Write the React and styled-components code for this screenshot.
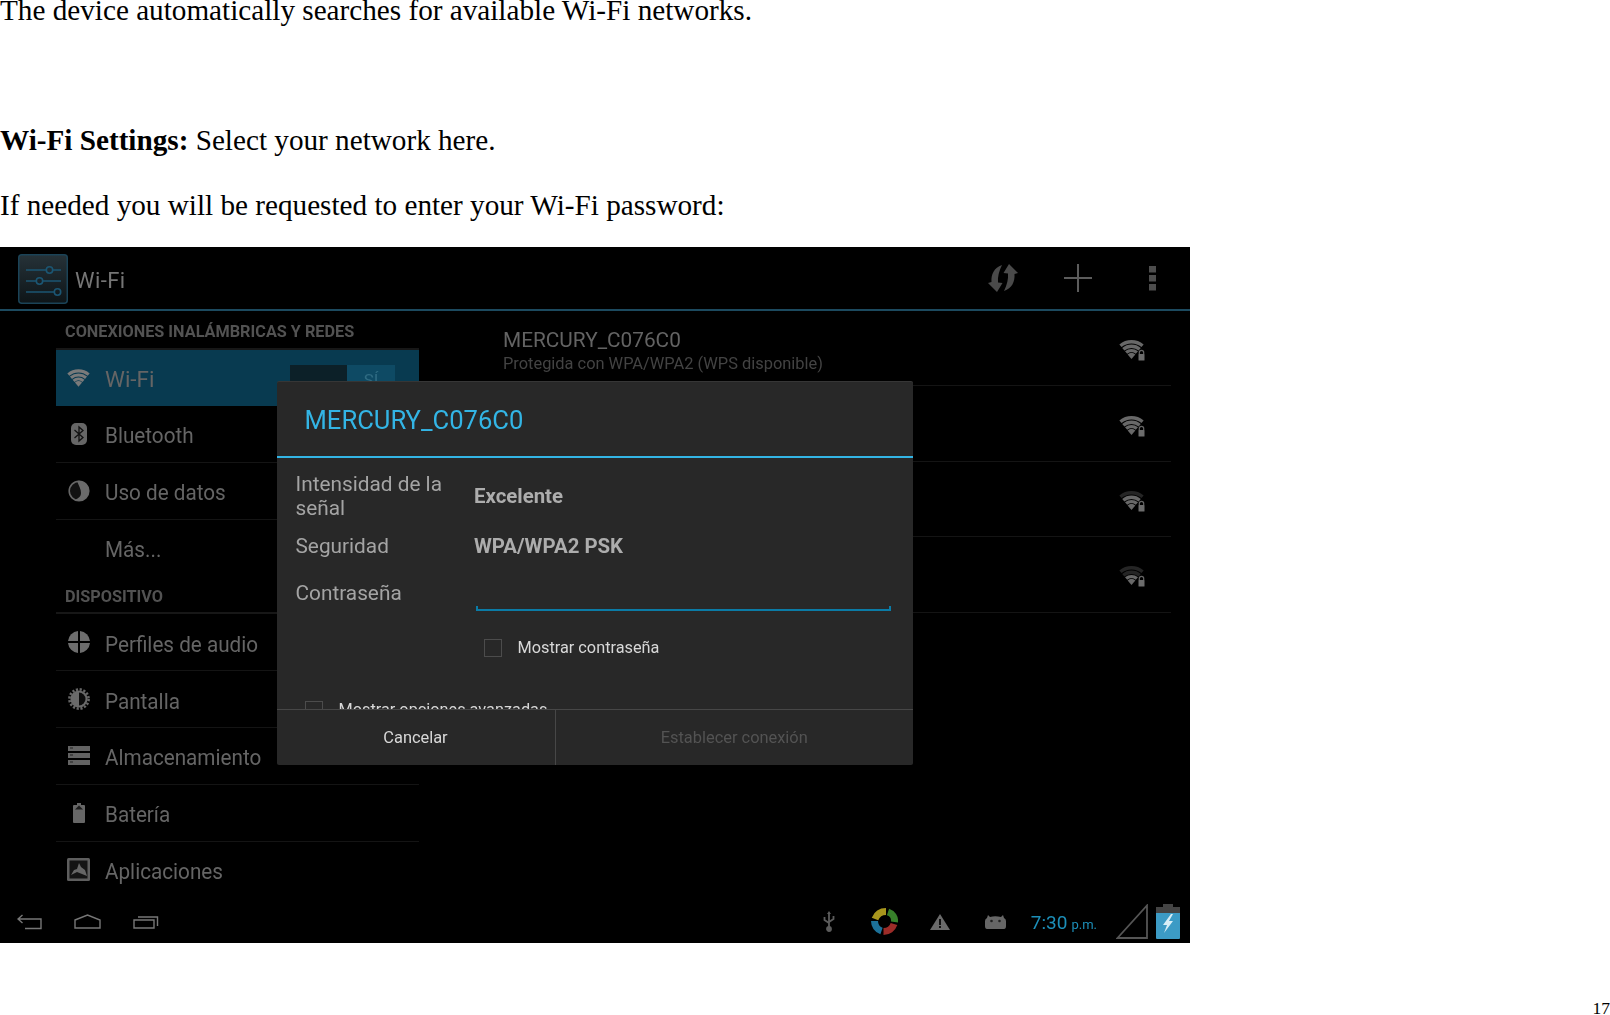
import React from "react";
import styled, { createGlobalStyle } from "styled-components";

const GlobalStyle = createGlobalStyle`
  html, body { margin: 0; padding: 0; background: #fff; }
  body { font-family: "Liberation Serif", "Times New Roman", serif; color: #000; overflow: hidden; }
`;

const Page = styled.div`
  width: 1610px;
  height: 1015px;
  overflow: hidden;
`;

const Paragraph = styled.p`
  margin: ${({ $top }) => $top}px 0 0;
  font-size: 29.2px;
  line-height: 22px;
  white-space: nowrap;
`;

const Screen = styled.div`
  position: relative;
  width: 1190px;
  height: 696px;
  margin-top: 31px;
  background: #000;
  display: flex;
  flex-direction: column;
  font-family: Roboto, "Noto Sans", sans-serif;
  filter: blur(0.55px);
  overflow: hidden;
`;

const PageNumber = styled.div`
  margin-top: 56px;
  text-align: right;
  font-size: 17.5px;
  line-height: 18px;
`;

const TopBar = styled.div`
  height: 62px;
  flex: none;
  border-bottom: 2px solid #1c4a5f;
  display: flex;
  align-items: center;
  padding: 0 0 0 18px;
`;

const TileSlot = styled.span`
  display: inline-flex;
  padding-top: 1px;
`;

const TopTitle = styled.span`
  margin-left: 7px;
  padding-top: 4px;
  font-size: 22px;
  letter-spacing: 0.4px;
  color: #757575;
  flex: 1;
`;

const TopActions = styled.div`
  display: flex;
  align-items: center;
  padding-right: 34px;
  gap: 46px;
`;

const OverflowSlot = styled.span`
  display: inline-flex;
  margin-left: 11px;
`;

const Content = styled.div`
  flex: 1;
  display: flex;
  min-height: 0;
`;

const LeftPane = styled.div`
  width: 363px;
  margin-left: 56px;
  flex: none;
`;

const SectionHeader = styled.div`
  height: ${({ $height }) => $height}px;
  box-sizing: border-box;
  padding: ${({ $pad }) => $pad}px 0 0 9px;
  border-bottom: 2px solid #171717;
  font-size: 16.25px;
  font-weight: 700;
  line-height: 20px;
  color: #525252;
  white-space: nowrap;
`;

const Row = styled.div`
  position: relative;
  height: ${({ $active }) => ($active ? 56 : 56.8)}px;
  box-sizing: border-box;
  display: flex;
  align-items: center;
  background: ${({ $active }) => ($active ? "#083a50" : "transparent")};
  border-bottom: ${({ $active, $last }) => ($active || $last ? "none" : "1px solid #141414")};
`;

const RowIcon = styled.div`
  width: 49px;
  flex: none;
  display: flex;
  justify-content: center;
  padding-right: 4px;
  box-sizing: border-box;
`;

const RowLabel = styled.span`
  display: inline-block;
  padding-top: ${({ $wide }) => ($wide ? 2 : 4)}px;
  font-size: 22px;
  color: #656565;
  white-space: nowrap;
  transform-origin: left center;
  transform: scaleX(${({ $wide }) => ($wide ? 1.02 : 0.94)});
`;

const Switch = styled.div`
  position: absolute;
  left: 234px;
  top: 15px;
  width: 105px;
  height: 40px;
  background: #0c2028;
  display: flex;
  justify-content: flex-end;
`;

const SwitchThumb = styled.div`
  width: 48px;
  background: #0e4a64;
  color: #2f6b82;
  font-size: 17px;
  text-align: center;
  padding-top: 5px;
  box-sizing: border-box;
`;

const RightPane = styled.div`
  width: 668px;
  margin-left: 84px;
  flex: none;
`;

const Network = styled.div`
  height: 75.4px;
  box-sizing: border-box;
  display: flex;
  align-items: center;
  justify-content: space-between;
  padding: 5px 26px 0 0;
  border-bottom: 1px solid #141414;
`;

const NetworkName = styled.div`
  font-size: 20.8px;
  line-height: 26px;
  color: #636363;
`;

const NetworkDetail = styled.div`
  font-size: 16.4px;
  line-height: 22px;
  color: #434343;
`;

const NavBar = styled.div`
  height: 48px;
  flex: none;
  box-sizing: border-box;
  display: flex;
  align-items: center;
  padding: 5px 10px 0 17px;
`;

const NavKeys = styled.div`
  display: flex;
  align-items: center;
  gap: 32px;
  flex: 1;
`;

const Tray = styled.div`
  display: flex;
  align-items: center;
`;

const Clock = styled.span`
  margin: 0 19px 0 25px;
  padding-top: 1px;
  color: #1c8fb9;
  font-size: 19px;
  white-space: nowrap;
`;

const ClockSuffix = styled.span`
  font-size: 13px;
  margin-left: 4px;
`;

const Dialog = styled.div`
  position: absolute;
  left: 276.5px;
  top: 135px;
  width: 636.5px;
  height: 383px;
  background: #282828;
  border-radius: 2px;
  display: flex;
  flex-direction: column;
  box-shadow: 0 -1px 0 #363636;
`;

const DialogTitle = styled.div`
  height: 76px;
  flex: none;
  box-sizing: border-box;
  border-bottom: 2px solid #33b5e5;
  padding: 2px 0 0 28px;
  display: flex;
  align-items: center;
  font-size: 25.6px;
  color: #33b5e5;
`;

const DialogBody = styled.div`
  flex: 1;
  min-height: 0;
  overflow: hidden;
  padding: 14px 22px 0 19px;
`;

const FieldGrid = styled.div`
  display: grid;
  grid-template-columns: 178.5px 1fr;
  row-gap: 14px;
  align-items: center;
`;

const FieldLabel = styled.div`
  font-size: 20.8px;
  line-height: 24px;
  color: #a4a4a4;
`;

const FieldValue = styled.div`
  font-size: 20.4px;
  font-weight: 700;
  color: #adadad;
  white-space: nowrap;
`;

const PasswordRow = styled.div`
  display: grid;
  grid-template-columns: 178.5px 1fr;
  margin-top: 23px;
`;

const PasswordInput = styled.div`
  height: 30px;
  margin-left: 2px;
  box-sizing: border-box;
  border: 2px solid #0b7ba6;
  border-top: none;
  border-image: linear-gradient(to top, #0b7ba6 0, #0b7ba6 5px, transparent 5px) 2;
`;

const CheckRow = styled.div`
  display: flex;
  align-items: center;
  margin: ${({ $top }) => $top}px 0 0 ${({ $left }) => $left}px;
`;

const CheckBox = styled.span`
  width: 18px;
  height: 18px;
  box-sizing: border-box;
  border: 1.5px solid #4c4c4c;
  flex: none;
`;

const CheckLabel = styled.span`
  margin-left: 16px;
  font-size: 16.3px;
  line-height: 20px;
  color: #d8d8d8;
`;

const DialogButtons = styled.div`
  height: 56px;
  flex: none;
  box-sizing: border-box;
  display: grid;
  grid-template-columns: 278px 1fr;
  border-top: 1px solid #474747;
`;

const DialogButton = styled.div`
  display: flex;
  align-items: center;
  justify-content: center;
  font-size: 16.4px;
  color: ${({ $disabled }) => ($disabled ? "#535353" : "#d8d8d8")};
  border-left: ${({ $disabled }) => ($disabled ? "1px solid #474747" : "none")};
`;

const Spacer = styled.span`
  display: inline-flex;
  margin-left: ${({ $left }) => $left}px;
`;

const SettingsTile = () => (
  <svg width="50" height="50" viewBox="0 0 50 50">
    <defs>
      <linearGradient id="tile" x1="0" y1="0" x2="0" y2="1">
        <stop offset="0" stopColor="#263238" />
        <stop offset="1" stopColor="#0e1518" />
      </linearGradient>
    </defs>
    <rect x="0.75" y="0.75" width="48.5" height="48.5" rx="3" fill="url(#tile)" stroke="#1b4357" strokeWidth="1.5" />
    <g stroke="#1b5673" strokeWidth="1.6" fill="none">
      <path d="M8 16H28M35 16H43M8 27H18M25 27H43M8 38H36" />
      <circle cx="31.5" cy="16" r="3.2" />
      <circle cx="21.5" cy="27" r="3.2" />
      <circle cx="39.5" cy="38" r="3.2" />
    </g>
  </svg>
);

const SyncIcon = () => (
  <svg width="30" height="28" viewBox="0 0 30 28" fill="#4a4a4a">
    <path d="M14 1C6 4 3 10 3.5 18L0 19L9 28L14.5 19L10 18.5C9.5 13 11 7 14 1Z" />
    <path d="M16 27C24 24 27 18 26.5 10L30 9L21 0L15.5 9L20 9.5C20.5 15 19 21 16 27Z" />
  </svg>
);

const PlusIcon = () => (
  <svg width="28" height="28" viewBox="0 0 28 28" stroke="#5c5c5c" strokeWidth="2">
    <path d="M14 0V28M0 14H28" />
  </svg>
);

const OverflowIcon = () => (
  <svg width="7" height="25" viewBox="0 0 7 25" fill="#4d4d4d">
    <rect width="7" height="6.5" />
    <rect y="9" width="7" height="6.5" />
    <rect y="18" width="7" height="6.5" />
  </svg>
);

// wedge of concentric bands shared by the row icon and the network list
const WifiBands = ({ outer, middle, inner, core }) => (
  <g fill="none" strokeWidth="3.4">
    <path d="M1.44 5.8A17.2 17.2 0 0 1 23.56 5.8" stroke={outer} />
    <path d="M4.3 9.2A12.8 12.8 0 0 1 20.7 9.2" stroke={middle} />
    <path d="M7.1 12.57A8.4 8.4 0 0 1 17.9 12.57" stroke={inner} />
    <path d="M8.64 14.4A6 6 0 0 1 16.36 14.4L12.5 19Z" fill={core} />
  </g>
);

const WifiGlyph = () => (
  <svg width="23" height="18" viewBox="0 0 25 19">
    <WifiBands outer="#7a7a7a" middle="#7a7a7a" inner="#7a7a7a" core="#7a7a7a" />
  </svg>
);

const BluetoothIcon = () => (
  <svg width="16" height="22" viewBox="0 0 16 22">
    <rect width="16" height="22" rx="5" fill="#666" />
    <path d="M3.5 7L12 14.5L8 18V4L12 7.5L3.5 15" fill="none" stroke="#111" strokeWidth="1.3" />
  </svg>
);

const DataIcon = () => (
  <svg width="22" height="22" viewBox="0 0 22 22">
    <circle cx="11" cy="11" r="9.8" fill="#111" stroke="#666" strokeWidth="1.6" />
    <path d="M9 1A10 10 0 1 1 7 20C10 18 13 17 13 13C13 9 11 6 9 1Z" fill="#6a6a6a" />
  </svg>
);

const AudioIcon = () => (
  <svg width="22" height="22" viewBox="0 0 22 22" fill="#6d6d6d">
    <path d="M10 0A11 11 0 0 0 0 10H10Z" />
    <path d="M12 0A11 11 0 0 1 22 10H12Z" />
    <path d="M10 22A11 11 0 0 1 0 12H10Z" />
    <path d="M12 22A11 11 0 0 0 22 12H12Z" />
  </svg>
);

const DisplayIcon = () => (
  <svg width="22" height="22" viewBox="0 0 22 22">
    <circle cx="11" cy="11" r="9.6" fill="none" stroke="#666" strokeWidth="2.6" strokeDasharray="2.2 1.6" />
    <circle cx="11" cy="11" r="8.6" fill="#6a6a6a" />
    <path d="M11 4.5A6.5 6.5 0 0 1 11 17.5Z" fill="#0c0c0c" />
  </svg>
);

const StorageIcon = () => (
  <svg width="22" height="19" viewBox="0 0 22 19" fill="#636363">
    <rect width="22" height="5" />
    <rect y="7" width="22" height="5" />
    <rect y="14" width="22" height="5" />
    <path d="M2 2H5M2 9H5M2 16H5" stroke="#222" strokeWidth="1" />
  </svg>
);

const BatteryIcon = () => (
  <svg width="12" height="20" viewBox="0 0 12 20" fill="#666">
    <path d="M4 0H8V2H11Q12 2 12 3V19Q12 20 11 20H1Q0 20 0 19V3Q0 2 1 2H4Z" />
    <path d="M2 6.5L6 2.5L10 6.5Z" fill="#1c1c1c" />
  </svg>
);

const AppsIcon = () => (
  <svg width="23" height="23" viewBox="0 0 23 23">
    <rect width="23" height="23" rx="1.5" fill="#5e5e5e" />
    <rect x="2.5" y="2.5" width="18" height="18" fill="#141414" />
    <path d="M4 17L7 12L10 11L12 5L14 9L18 12L20 18L10 14Z" fill="#666" />
  </svg>
);

const LEFT_ICONS = {
  Bluetooth: <BluetoothIcon />,
  "Uso de datos": <DataIcon />,
  "Perfiles de audio": <AudioIcon />,
  Pantalla: <DisplayIcon />,
  Almacenamiento: <StorageIcon />,
  Batería: <BatteryIcon />,
  Aplicaciones: <AppsIcon />,
};

// bands: how many of the three outer bands are lit
const NetworkSignal = ({ bands }) => {
  const shade = (n) => (bands >= n ? "#686868" : "#252525");
  return (
    <svg width="26" height="21" viewBox="0 0 26 21">
      <WifiBands outer={shade(3)} middle={shade(2)} inner={shade(1)} core="#686868" />
      <path d="M20.3 14V12.5A2.2 2.2 0 0 1 24.7 12.5V14" fill="none" stroke="#666" strokeWidth="1.2" />
      <rect x="19.5" y="14" width="6" height="6.5" rx="0.6" fill="#6c6c6c" />
    </svg>
  );
};

const BackKey = () => (
  <svg width="25" height="16" viewBox="0 0 25 16" fill="none" stroke="#777" strokeWidth="1.4">
    <path d="M5.5 1L1 5L5.5 9M1 5H24V14.5H8" />
  </svg>
);

const HomeKey = () => (
  <svg width="27" height="15" viewBox="0 0 27 15" fill="none" stroke="#777" strokeWidth="1.4">
    <path d="M1 6L13.5 1L26 6V14H1Z" />
  </svg>
);

const RecentKey = () => (
  <svg width="26" height="15" viewBox="0 0 26 15" fill="none" stroke="#777" strokeWidth="1.4">
    <path d="M1 6H21V14H1Z" />
    <path d="M5 3H24.5V12" />
  </svg>
);

const UsbIcon = () => (
  <svg width="12" height="21" viewBox="0 0 12 21" fill="none" stroke="#5c5c5c" strokeWidth="1.8">
    <path d="M6 3V18M1.5 6V9L6 12M10.5 5V8L6 11" />
    <circle cx="6" cy="18" r="2" fill="#5c5c5c" />
    <path d="M6 0L8 3H4Z" fill="#5c5c5c" stroke="none" />
  </svg>
);

const ColorWheel = () => (
  <svg width="27" height="27" viewBox="0 0 27 27" fill="none" strokeWidth="7">
    <path d="M4 11C6 6 10 3.5 15 3.5" stroke="#a8961d" />
    <path d="M17 4C21.5 5.5 24 9.5 23.5 14" stroke="#37802a" />
    <path d="M23 16C21.5 20.5 17.5 23.5 12.5 23.5" stroke="#9c2c28" />
    <path d="M10.5 23C6 21.5 3.5 17.5 3.5 13" stroke="#1c7199" />
  </svg>
);

const WarningIcon = () => (
  <svg width="20" height="16" viewBox="0 0 20 16">
    <path d="M10 0L20 16H0Z" fill="#6a6a6a" />
    <rect x="9" y="5" width="2" height="6" fill="#111" />
    <rect x="9" y="12" width="2" height="2" fill="#111" />
  </svg>
);

const AndroidIcon = () => (
  <svg width="21" height="14" viewBox="0 0 21 14">
    <path d="M2 14Q0 14 0 11V6Q0 4 2 3L3 0L5 2Q10 0.5 16 2L18 0L19 3Q21 4 21 6V11Q21 14 19 14Z" fill="#666" />
    <circle cx="6.5" cy="6" r="1.3" fill="#222" />
    <circle cx="14.5" cy="6" r="1.3" fill="#222" />
  </svg>
);

const SignalIcon = () => (
  <svg width="32" height="35" viewBox="0 0 32 35" fill="none" stroke="#555" strokeWidth="1.8">
    <path d="M1.5 34L31 1.5V34Z" />
  </svg>
);

const ChargeIcon = () => (
  <svg width="24" height="35" viewBox="0 0 24 35">
    <path d="M7 0H17V3H23Q24 3 24 4V34Q24 35 23 35H1Q0 35 0 34V4Q0 3 1 3H7Z" fill="#3c9bc5" />
    <path d="M7 0H17V3H24V9H0V3H7Z" fill="#444" />
    <path d="M15 10L7 21H11L8 29L17 17H13L17 10Z" fill="#d8eef6" />
  </svg>
);

const NETWORKS = [3, 3, 2, 1];

const App = () => (
  <Page>
    <GlobalStyle />
    <Paragraph $top={-1}>The device automatically searches for available Wi-Fi networks.</Paragraph>
    <Paragraph $top={108}>
      <strong>Wi-Fi Settings:</strong> Select your network here.
    </Paragraph>
    <Paragraph $top={43}>If needed you will be requested to enter your Wi-Fi password:</Paragraph>

    <Screen>
      <TopBar>
        <TileSlot><SettingsTile /></TileSlot>
        <TopTitle>Wi-Fi</TopTitle>
        <TopActions>
          <SyncIcon />
          <PlusIcon />
          <OverflowSlot><OverflowIcon /></OverflowSlot>
        </TopActions>
      </TopBar>

      <Content>
        <LeftPane>
          <SectionHeader $height={39} $pad={11}>CONEXIONES INALÁMBRICAS Y REDES</SectionHeader>
          <Row $active>
            <RowIcon><WifiGlyph /></RowIcon>
            <RowLabel $wide>Wi-Fi</RowLabel>
            <Switch><SwitchThumb>SÍ</SwitchThumb></Switch>
          </Row>
          {["Bluetooth", "Uso de datos"].map((label) => (
            <Row key={label}>
              <RowIcon>{LEFT_ICONS[label]}</RowIcon>
              <RowLabel>{label}</RowLabel>
            </Row>
          ))}
          <Row $last>
            <RowIcon />
            <RowLabel>Más...</RowLabel>
          </Row>
          <SectionHeader $height={38} $pad={11}>DISPOSITIVO</SectionHeader>
          {["Perfiles de audio", "Pantalla", "Almacenamiento", "Batería", "Aplicaciones"].map((label, i) => (
            <Row key={label} $last={i === 4}>
              <RowIcon>{LEFT_ICONS[label]}</RowIcon>
              <RowLabel>{label}</RowLabel>
            </Row>
          ))}
        </LeftPane>

        <RightPane>
          {NETWORKS.map((bands, i) => (
            <Network key={i}>
              <div>
                {i === 0 && <NetworkName>MERCURY_C076C0</NetworkName>}
                {i === 0 && <NetworkDetail>Protegida con WPA/WPA2 (WPS disponible)</NetworkDetail>}
              </div>
              <NetworkSignal bands={bands} />
            </Network>
          ))}
        </RightPane>
      </Content>

      <NavBar>
        <NavKeys>
          <BackKey />
          <HomeKey />
          <RecentKey />
        </NavKeys>
        <Tray>
          <UsbIcon />
          <Spacer $left={36}><ColorWheel /></Spacer>
          <Spacer $left={32}><WarningIcon /></Spacer>
          <Spacer $left={35}><AndroidIcon /></Spacer>
          <Clock>7:30<ClockSuffix>p.m.</ClockSuffix></Clock>
          <SignalIcon />
          <Spacer $left={8}><ChargeIcon /></Spacer>
        </Tray>
      </NavBar>

      <Dialog>
        <DialogTitle>MERCURY_C076C0</DialogTitle>
        <DialogBody>
          <FieldGrid>
            <FieldLabel>Intensidad de la señal</FieldLabel>
            <FieldValue>Excelente</FieldValue>
            <FieldLabel>Seguridad</FieldLabel>
            <FieldValue>WPA/WPA2 PSK</FieldValue>
          </FieldGrid>
          <PasswordRow>
            <FieldLabel>Contraseña</FieldLabel>
            <PasswordInput />
          </PasswordRow>
          <CheckRow $top={27} $left={188}>
            <CheckBox />
            <CheckLabel>Mostrar contraseña</CheckLabel>
          </CheckRow>
          <CheckRow $top={42} $left={9}>
            <CheckBox />
            <CheckLabel>Mostrar opciones avanzadas</CheckLabel>
          </CheckRow>
        </DialogBody>
        <DialogButtons>
          <DialogButton>Cancelar</DialogButton>
          <DialogButton $disabled>Establecer conexión</DialogButton>
        </DialogButtons>
      </Dialog>
    </Screen>

    <PageNumber>17</PageNumber>
  </Page>
);

export default App;
